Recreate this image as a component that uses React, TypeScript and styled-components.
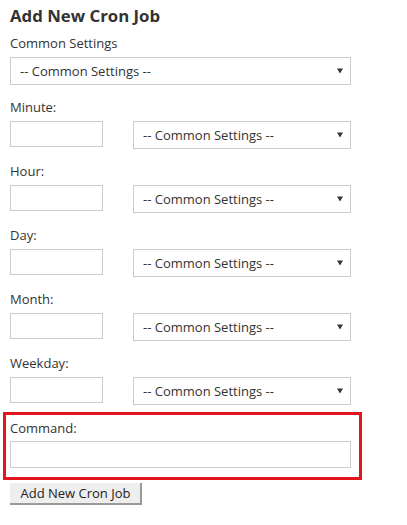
import React from 'react';
import styled, { createGlobalStyle } from 'styled-components';

const GlobalStyle = createGlobalStyle`
  body {
    margin: 0;
    background: #fff;
    font-family: "Open Sans", "Liberation Sans", Arial, sans-serif;
    color: #333;
  }
`;

const Page = styled.div`
  padding: 4px 0 0 10px;
  width: 341px;
`;

const Title = styled.h2`
  margin: 0 0 7px;
  font-size: 16.8px;
  line-height: 23px;
  font-weight: 700;
  color: #333;
`;

const Fields = styled.div`
  display: flex;
  flex-direction: column;
  gap: 13px;
`;

const Field = styled.div`
  display: flex;
  flex-direction: column;
  gap: 5px;
`;

const Label = styled.label`
  display: block;
  font-size: 13px;
  line-height: 18px;
  color: #333;
`;

const Row = styled.div`
  display: flex;
  align-items: flex-start;
  gap: 30px;
`;

const TextInput = styled.input<{ $full?: boolean }>`
  box-sizing: border-box;
  width: ${(p) => (p.$full ? '341px' : '93px')};
  height: ${(p) => (p.$full ? '27px' : '26px')};
  margin: 0;
  padding: 2px 6px;
  border: 1px solid #ccc;
  border-radius: 0;
  background: #fff;
  font-family: inherit;
  font-size: 13px;
  outline: none;
`;

const SelectWrap = styled.div<{ $width: number }>`
  position: relative;
  width: ${(p) => p.$width}px;
  height: 28px;
`;

const Select = styled.select`
  box-sizing: border-box;
  width: 100%;
  height: 28px;
  margin: 0;
  padding: 0 24px 0 9px;
  border: 1px solid #ccc;
  border-radius: 0;
  background: #fff;
  appearance: none;
  -webkit-appearance: none;
  font-family: inherit;
  font-size: 13px;
  color: #333;
  outline: none;
`;

const Arrow = styled.svg`
  position: absolute;
  right: 8px;
  top: 11px;
  width: 6px;
  height: 6px;
  pointer-events: none;
`;

const CommandBox = styled.div`
  margin: 7px 0 0 -7px;
  width: 359px;
  box-sizing: border-box;
  border: 3px solid #e3141d;
  padding: 4px 8px 9px 4px;
  display: flex;
  flex-direction: column;
  gap: 4px;
`;

const SubmitButton = styled.button`
  margin-top: 3px;
  box-sizing: border-box;
  width: 132px;
  height: 22px;
  padding: 0 0 0 1px;
  border: none;
  border-right: 2px solid #9a9a9a;
  border-bottom: 2px solid #9a9a9a;
  border-radius: 0;
  background: #eee;
  font-family: inherit;
  font-size: 13px;
  line-height: 20px;
  color: #222;
`;

const CommonSelect: React.FC<{ width: number }> = ({ width }) => (
  <SelectWrap $width={width}>
    <Select defaultValue="">
      <option value="">-- Common Settings --</option>
    </Select>
    <Arrow viewBox="0 0 6 6">
      <path d="M0 0.5 H6 L3 5.5 Z" fill="#333" />
    </Arrow>
  </SelectWrap>
);

const fields = ['Minute', 'Hour', 'Day', 'Month', 'Weekday'];

export default function App() {
  return (
    <Page>
      <GlobalStyle />
      <Title>Add New Cron Job</Title>
      <Fields>
        <Field>
          <Label>Common Settings</Label>
          <CommonSelect width={341} />
        </Field>
        {fields.map((name) => (
          <Field key={name}>
            <Label>{name}:</Label>
            <Row>
              <TextInput type="text" />
              <CommonSelect width={218} />
            </Row>
          </Field>
        ))}
      </Fields>
      <CommandBox>
        <Label>Command:</Label>
        <TextInput type="text" $full />
      </CommandBox>
      <SubmitButton type="button">Add New Cron Job</SubmitButton>
    </Page>
  );
}
